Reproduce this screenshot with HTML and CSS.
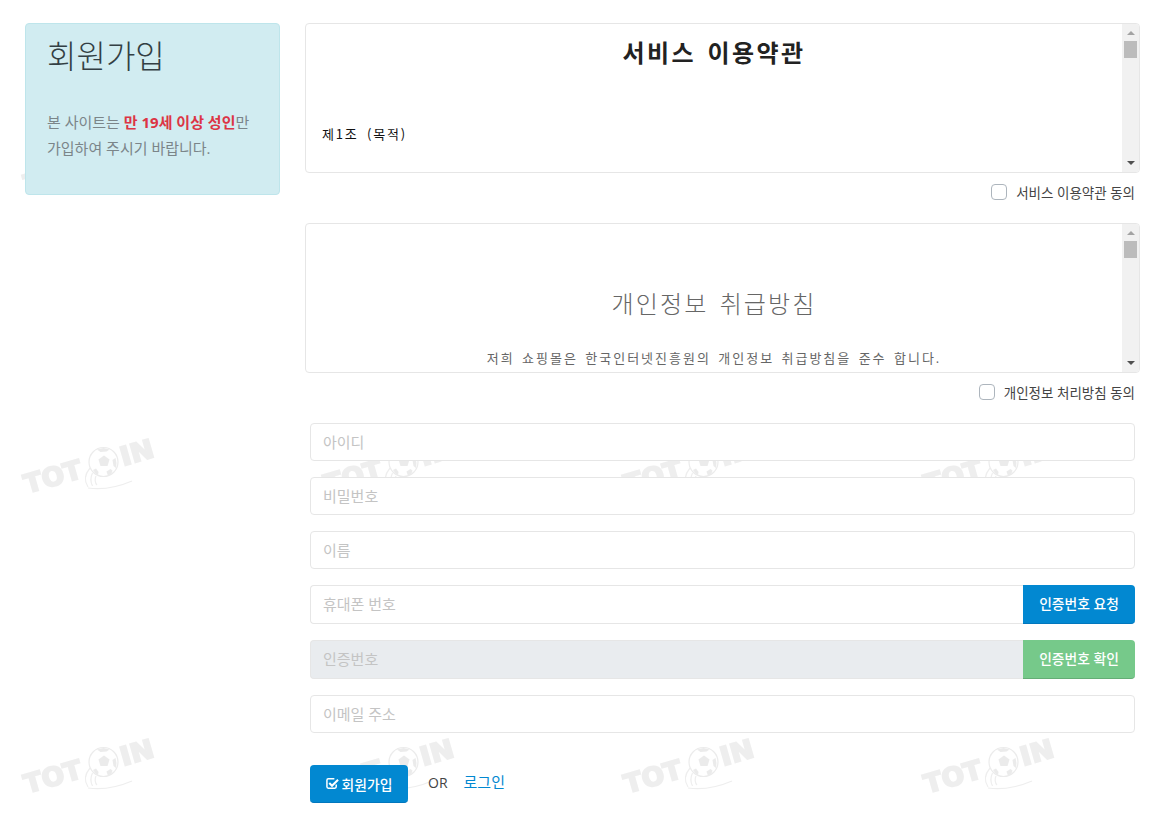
FILE: index.html
```html
<!DOCTYPE html>
<html lang="ko">
<head>
<meta charset="utf-8">
<title>회원가입</title>
<link rel="stylesheet" href="styles.css">
</head>
<body>
<main class="page">
  <aside class="intro">
    <h1 class="intro-title">회원가입</h1>
    <p class="intro-text">본 사이트는 <strong class="danger">만 19세 이상 성인</strong>만<br>가입하여 주시기 바랍니다.</p>
  </aside>
  <section class="content">
    <div class="terms">
      <div class="terms-body">
        <h2 class="terms-heading">서비스 이용약관</h2>
        <p class="terms-line">제1조 (목적)</p>
      </div>
      <div class="scroll"><span class="arrow-up"></span><span class="thumb"></span><span class="arrow-down"></span></div>
    </div>
    <label class="agree"><span class="check"></span>서비스 이용약관 동의</label>
    <div class="terms">
      <div class="terms-body privacy">
        <h2 class="privacy-heading">개인정보 취급방침</h2>
        <p class="privacy-line">저희 쇼핑몰은 한국인터넷진흥원의 개인정보 취급방침을 준수 합니다.</p>
      </div>
      <div class="scroll"><span class="arrow-up"></span><span class="thumb"></span><span class="arrow-down"></span></div>
    </div>
    <label class="agree"><span class="check"></span>개인정보 처리방침 동의</label>
    <form class="form">
      <input class="field" placeholder="아이디">
      <input class="field" placeholder="비밀번호">
      <input class="field" placeholder="이름">
      <div class="group">
        <input class="field joined" placeholder="휴대폰 번호">
        <button type="button" class="btn blue addon">인증번호 요청</button>
      </div>
      <div class="group">
        <input class="field joined" placeholder="인증번호" disabled>
        <button type="button" class="btn green addon">인증번호 확인</button>
      </div>
      <input class="field" placeholder="이메일 주소">
      <div class="actions">
        <button type="button" class="btn blue submit">
          <svg class="icon" viewBox="0 0 14 14"><path d="M11 8v2.500A1.500 1.500 0 0 1 9.500 12h-7A1.500 1.500 0 0 1 1 10.500v-7A1.500 1.500 0 0 1 2.500 2H9" fill="none" stroke="#fff" stroke-width="1.600"/><path d="M3.500 6.500l3 3 6.500-6.500" fill="none" stroke="#fff" stroke-width="2.200"/></svg>회원가입</button>
        <span class="or">OR</span>
        <a class="login" href="#">로그인</a>
      </div>
    </form>
  </section>
</main>
</body>
</html>
```
FILE: styles.css
```css
* { box-sizing: border-box; }
html, body { margin: 0; padding: 0; height: 829px; overflow: hidden; }
body {
  color: #444;
  font-family: "Open Sans", "Noto Sans CJK KR", sans-serif;
  font-size: 14px;
  background-color: #fff;
  background-size: 300px 300px;
  background-repeat: repeat;
  background-image: url("data:image/svg+xml,%3Csvg xmlns='http://www.w3.org/2000/svg' width='300' height='300'%3E%3Cg font-family='DejaVu Sans' font-weight='700' font-size='26' fill='%23eeeeee' stroke='%23eeeeee' stroke-width='1.800'%3E%3Ctext transform='translate(27 193.500) rotate(-16)' textLength='59' lengthAdjust='spacingAndGlyphs'%3ETOT%3C/text%3E%3Ctext transform='translate(123 166) rotate(-16)' textLength='34' lengthAdjust='spacingAndGlyphs'%3EIN%3C/text%3E%3C/g%3E%3Ccircle cx='103.500' cy='162' r='14.500' fill='%23fff' stroke='%23ebebeb' stroke-width='1.200'/%3E%3Cpath d='M104 155.500l5.500 4-2 6.500h-7l-2-6.500zM97 149.500l3.500 2.500 6-.5 3 -2-6-1.500zM115.500 158l-3 2 1 6 2.500 2 .5-5zM108 176l-1.500-4.500 4-2.500 2 1.500-1 3zM93 170l3-1.500 2.500 3.500-.5 3-2-1z' fill='%23ebebeb'/%3E%3Cpath d='M90 168c-5 6-6 13-2 19M92.500 173c-2 4-2 9 0 13M96 176c-1.500 3-1 7 1 9M88 188c14 2 30-1 44-7' fill='none' stroke='%23eeeeee' stroke-width='1.200'/%3E%3C/svg%3E");
}

.page {
  display: flex;
  gap: 25px;
  padding: 23px 28px 0 25px;
}
.intro {
  flex: 0 0 255px;
  height: 172px;
  padding: 12px 20px 0 21px;
  background: #d1ecf1;
  border: 1px solid #bee5eb;
  border-radius: 4px;
}
.intro-title {
  margin: 0;
  font-size: 32px;
  line-height: 40px;
  font-weight: 300;
  color: #333f44;
}
.intro-text {
  margin: 34px 0 0;
  font-size: 15px;
  line-height: 25.500px;
  white-space: nowrap;
  color: #7b8589;
}
.danger { color: #dc3545; font-weight: 700; }

.content { flex: 1; min-width: 0; }
.terms {
  display: flex;
  height: 150px;
  background: #fff;
  border: 1px solid #e6e6e6;
  border-radius: 4px;
  overflow: hidden;
}
.terms-body { flex: 1; min-width: 0; overflow: hidden; }
.terms-heading {
  margin: 13px 0 0;
  text-align: center;
  font-size: 24px;
  line-height: 32px;
  font-weight: 700;
  color: #222;
  letter-spacing: 2.400px;
  word-spacing: 3px;
}
.terms-line {
  margin: 56px 0 0 16px;
  font-size: 13px;
  line-height: 18px;
  color: #111;
  font-family: "Noto Sans CJK KR", sans-serif;
  letter-spacing: 1.800px;
  word-spacing: 3px;
}
.privacy { text-align: center; }
.privacy-heading {
  margin: 62px 0 0;
  font-size: 24px;
  line-height: 36px;
  font-weight: 300;
  color: #666;
  letter-spacing: 2.100px;
  word-spacing: 3px;
}
.privacy-line {
  margin: 27px 0 0;
  font-size: 13px;
  line-height: 18px;
  color: #666;
  letter-spacing: 2px;
  word-spacing: 2px;
}
.scroll {
  flex: 0 0 17px;
  display: flex;
  flex-direction: column;
  align-items: center;
  background: #f1f1f1;
  padding-top: 7px;
}
.arrow-up, .arrow-down {
  width: 0;
  height: 0;
  border-left: 4px solid transparent;
  border-right: 4px solid transparent;
}
.arrow-up { border-bottom: 4px solid #a3a3a3; }
.arrow-down { margin-top: auto; margin-bottom: 7px; border-top: 4px solid #505050; }
.thumb { width: 13px; height: 17px; margin-top: 6px; background: #bcbcbc; }
.agree {
  display: flex;
  justify-content: flex-end;
  align-items: center;
  gap: 9px;
  height: 50px;
  padding: 0 5px 12px 0;
  background: #fff;
  font-size: 13.500px;
  color: #444;
}
.check {
  width: 16px;
  height: 16px;
  background: #fff;
  border: 1px solid #adb5bd;
  border-radius: 4px;
}
.form { display: flex; flex-direction: column; padding: 0 5px; }
.field {
  display: block;
  width: 100%;
  height: 38px;
  margin-bottom: 16px;
  padding: 0 12px 1px;
  font: inherit;
  font-size: 15px;
  color: #444;
  background: #fff;
  border: 1px solid #e6e6e6;
  border-radius: 4px;
  outline: 0;
}
.field::placeholder { color: #c4c4c4; opacity: 1; }
.field:disabled { background: #e9ecef; border-color: #e6e6e6; }
.group { display: flex; height: 39px; margin-bottom: 16px; }
.joined {
  flex: 1;
  height: 39px;
  margin: 0;
  border-right: 0;
  border-radius: 4px 0 0 4px;
}
.btn {
  font: inherit;
  font-size: 13.800px;
  font-weight: 500;
  color: #fff;
  border: 0;
  border-radius: 4px;
  cursor: pointer;
}
.blue { background: #0288d1; border-bottom: 1px solid #0277bd; }
.green { background: #76c98a; border-bottom: 1px solid #64ad75; }
.addon { flex: 0 0 112px; padding: 0 0 2px; border-radius: 0 4px 4px 0; }
.actions { display: flex; align-items: center; margin-top: 16px; }
.submit {
  display: flex;
  align-items: center;
  justify-content: center;
  gap: 3px;
  width: 98px;
  height: 38px;
  padding: 0;
}
.icon { width: 13px; height: 13px; }
.or { margin: -3px 0 0 20px; font-size: 14px; color: #444; }
.login {
  margin: -5px 0 0 16px;
  font-size: 15px;
  color: #0288d1;
  text-decoration: none;
}
```
